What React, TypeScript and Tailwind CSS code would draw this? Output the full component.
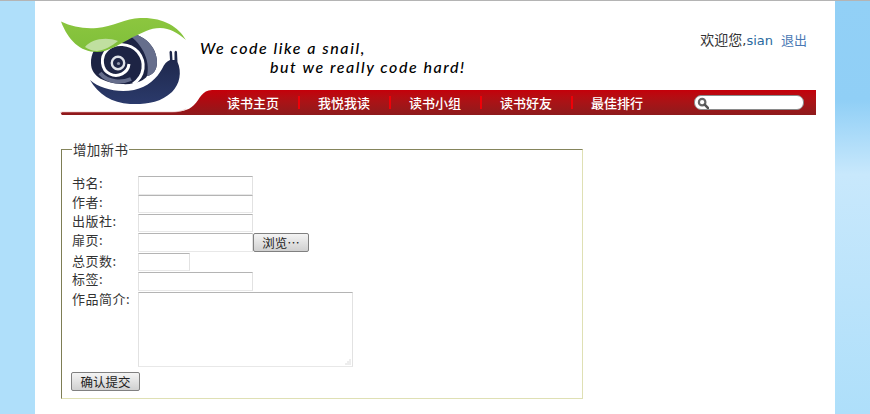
import React from "react";

const cjk = { fontFamily: '"Noto Sans CJK SC", sans-serif' };

function Logo() {
  return (
    <svg viewBox="60 15 130 92" width="130" height="92" className="relative z-10 shrink-0">
      <defs>
        <linearGradient id="leaf" x1="0" y1="0" x2="0" y2="1">
          <stop offset="0" stopColor="#8cc63f" />
          <stop offset="1" stopColor="#7fbf3a" />
        </linearGradient>
        <linearGradient id="body" x1="0" y1="0" x2="0" y2="1">
          <stop offset="0" stopColor="#1c2547" />
          <stop offset="1" stopColor="#2b3a6b" />
        </linearGradient>
      </defs>
      <path d="M91 63 C91 45 108 33 125 33 C145 33 157 48 157 62 C157 70 153 75 147 76 C145 80 135 85 122 84 C105 83 91 77 91 63Z" fill="#1d2444" />
      <path d="M125 33 C145 33 157 48 157 62 C157 70 153 75 147 76 C151 60 141 41 125 33Z" fill="#666e8c" />
      <path d="M100 73 C108 83 122 83 131 79" fill="none" stroke="#666e8c" strokeWidth="4" />
      <path d="M133 84 C145 76 146 62 138 52 C130 43 115 42 107 50 C100 57 101 70 110 74 C118 78 128 73 129 64" fill="none" stroke="#fff" strokeWidth="3" />
      <circle cx="118" cy="63" r="6.2" fill="none" stroke="#dfe2e8" strokeWidth="2.4" />
      <circle cx="118.5" cy="63.5" r="1.6" fill="#8c92a6" />
      <path d="M90 80 C100 89 118 93 134 90 C148 87 157 78 162 69 C164 64 167 61 170 60 L169.5 52 Q170.5 49.5 172 52 L172.5 60 L174.5 60 L174.5 52 Q176 49.5 177 52 L177.5 62 C182 72 180 84 172 92 C160 103 146 104.5 130 104 C112 103 98 94 90 80Z" fill="url(#body)" />
      <path d="M61 21.5 C72 27 84 29 97 28 C112 27 126 18 140 18 C162 17 178 26 186 40 C178 33 170 28 160 28 C150 28 142 33 133 37 C120 44 108 52 97 52 C80 52 68 40 61 21.5Z" fill="url(#leaf)" />
      <path d="M85 47 C90 40 105 36 118 41 C112 46 105 50 97 51 C92 51 88 49 85 47Z" fill="#c0dfa0" />
    </svg>
  );
}

function NavItem({ label, last }: { label: string; last?: boolean }) {
  return (
    <div className="flex items-center">
      <a className="w-[53px] text-[13px] font-medium leading-[18px] whitespace-nowrap text-white">{label}</a>
      {!last && <span className="mx-[18px] h-[13px] w-[2px] bg-[#f00008]" />}
    </div>
  );
}

function Row({ label, rowClass, labelClass, children }: { label: string; rowClass?: string; labelClass: string; children: React.ReactNode }) {
  return (
    <div className={`flex items-start ${rowClass ?? ""}`}>
      <label className={`w-[66px] shrink-0 text-[13px] tracking-[0.5px] text-[#333] ${labelClass}`}>{label}</label>
      {children}
    </div>
  );
}

const field =
  "block border border-t-[#b4b4b4] border-l-[#e2e2e2] border-r-[#e2e2e2] border-b-[#e8e8e8] bg-white outline-none";
const btn =
  "rounded-[2px] border border-[#808080] bg-gradient-to-b from-[#f4f4f4] to-[#d0d0d0] text-[12.5px] leading-[17px] text-[#222]";

export default function App() {
  return (
    <div className="flex h-screen overflow-hidden border-t border-[#b4b4b4]" style={cjk}>
      <div className="w-[35px] shrink-0 bg-[#afdffa]" />
      <div className="min-w-0 flex-1 bg-white pl-[25px] pr-[19px]">
        <header className="flex h-[89px] items-start">
          <div className="mt-[14px]">
            <Logo />
          </div>
          <div
            className="ml-[10px] mt-[37px] w-[320px] text-[16px] font-medium italic leading-[19px] tracking-[1.55px] text-black"
            style={{ fontFamily: '"Lato", sans-serif' }}
          >
            <div>We code like a snail,</div>
            <div className="pl-[70px]">but we really code hard!</div>
          </div>
          <div className="ml-auto mr-[9px] mt-[29px] text-[13px] leading-[18px] text-[#333]">
            <span className="text-[14px]">欢迎您</span>
            <span style={{ fontFamily: '"DejaVu Sans", sans-serif' }}>,</span>
            <a className="text-[#2a6a9e]" style={{ fontFamily: '"DejaVu Sans", sans-serif' }}>sian</a>
            <a className="ml-[8px] text-[#4a78b4]">退出</a>
          </div>
        </header>

        <nav className="flex h-[25px]">
          <svg viewBox="0 0 167 25" width="167" height="25" className="shrink-0">
            <defs>
              <linearGradient id="red" x1="0" y1="0" x2="0" y2="1">
                <stop offset="0" stopColor="#c4000a" />
                <stop offset="1" stopColor="#8e1a1c" />
              </linearGradient>
            </defs>
            <path d="M167 0 L152 0 C142 0 140 9 134 15 C128 21 120 22 112 22 L2 22 Q0 23.5 2 25 L167 25Z" fill="url(#red)" />
            <path d="M0 23.5 Q0 22 2 22 L112 22 C118 22 122 21 126 19" fill="none" stroke="#e8b8b8" strokeWidth="0.6" />
          </svg>
          <div className="flex flex-1 items-center bg-gradient-to-b from-[#c4000a] to-[#8e1a1c] pr-[12px]">
            <div className="flex items-center">
              <NavItem label="读书主页" />
              <NavItem label="我悦我读" />
              <NavItem label="读书小组" />
              <NavItem label="读书好友" />
              <NavItem label="最佳排行" last />
            </div>
            <div className="ml-auto flex h-[15px] w-[110px] items-center rounded-[7px] border border-[#8a8a8a] bg-white pl-[2px]">
              <svg viewBox="0 0 14 14" width="12" height="12">
                <circle cx="6" cy="6" r="3.8" fill="none" stroke="#666" strokeWidth="2.6" />
                <path d="M9 9 L13 13" stroke="#555" strokeWidth="3" strokeLinecap="round" />
              </svg>
            </div>
          </div>
        </nav>

        <fieldset className="ml-px mt-[26px] h-[258px] w-[522px] border border-b-[#dfe0b4] border-l-[#7d7d55] border-r-[#dfe0b4] border-t-[#85855c] pl-[10px] pt-[19px]">
          <legend className="px-px text-[13.5px] leading-[16px] tracking-[0.3px] text-[#333]">增加新书</legend>
          <div className="flex flex-col">
            <Row label="书名:" labelClass="leading-[14px]"><input className={`${field} h-[19px] w-[115px]`} /></Row>
            <Row label="作者:" rowClass="mb-px" labelClass="leading-[14px]"><input className={`${field} h-[18px] w-[115px]`} /></Row>
            <Row label="出版社:" rowClass="mb-px" labelClass="leading-[14px]"><input className={`${field} h-[18px] w-[115px]`} /></Row>
            <Row label="扉页:" rowClass="mb-px" labelClass="leading-[14px]">
              <input className={`${field} h-[19px] w-[115px]`} />
              <button className={`${btn} h-[19px] w-[56px]`}>浏览…</button>
            </Row>
            <Row label="总页数:" rowClass="mb-px" labelClass="leading-[15px]"><input className={`${field} h-[18px] w-[52px]`} /></Row>
            <Row label="标签:" rowClass="mb-px" labelClass="leading-[13px]"><input className={`${field} h-[19px] w-[115px]`} /></Row>
            <Row label="作品简介:" labelClass="leading-[13px]">
              <div className="relative h-[75px] w-[215px]">
                <textarea className={`${field} h-full w-full resize-none`} />
                <svg viewBox="0 0 6 6" width="6" height="6" className="absolute bottom-[2px] right-[2px]">
                  <path d="M5 0.5V5.5M3 2.5V5.5M1 4.5V5.5" stroke="#b8b8b8" strokeWidth="1" strokeDasharray="1 1" />
                </svg>
              </div>
            </Row>
            <div className="-ml-px mt-px">
              <button className={`${btn} h-[19px] w-[69px]`}>确认提交</button>
            </div>
          </div>
        </fieldset>
      </div>
      <div className="w-[35px] shrink-0 bg-[linear-gradient(to_bottom,#92d0f6_0%,#90cff6_24%,#c8e8fc_42%,#aedffa_100%)]" />
    </div>
  );
}
